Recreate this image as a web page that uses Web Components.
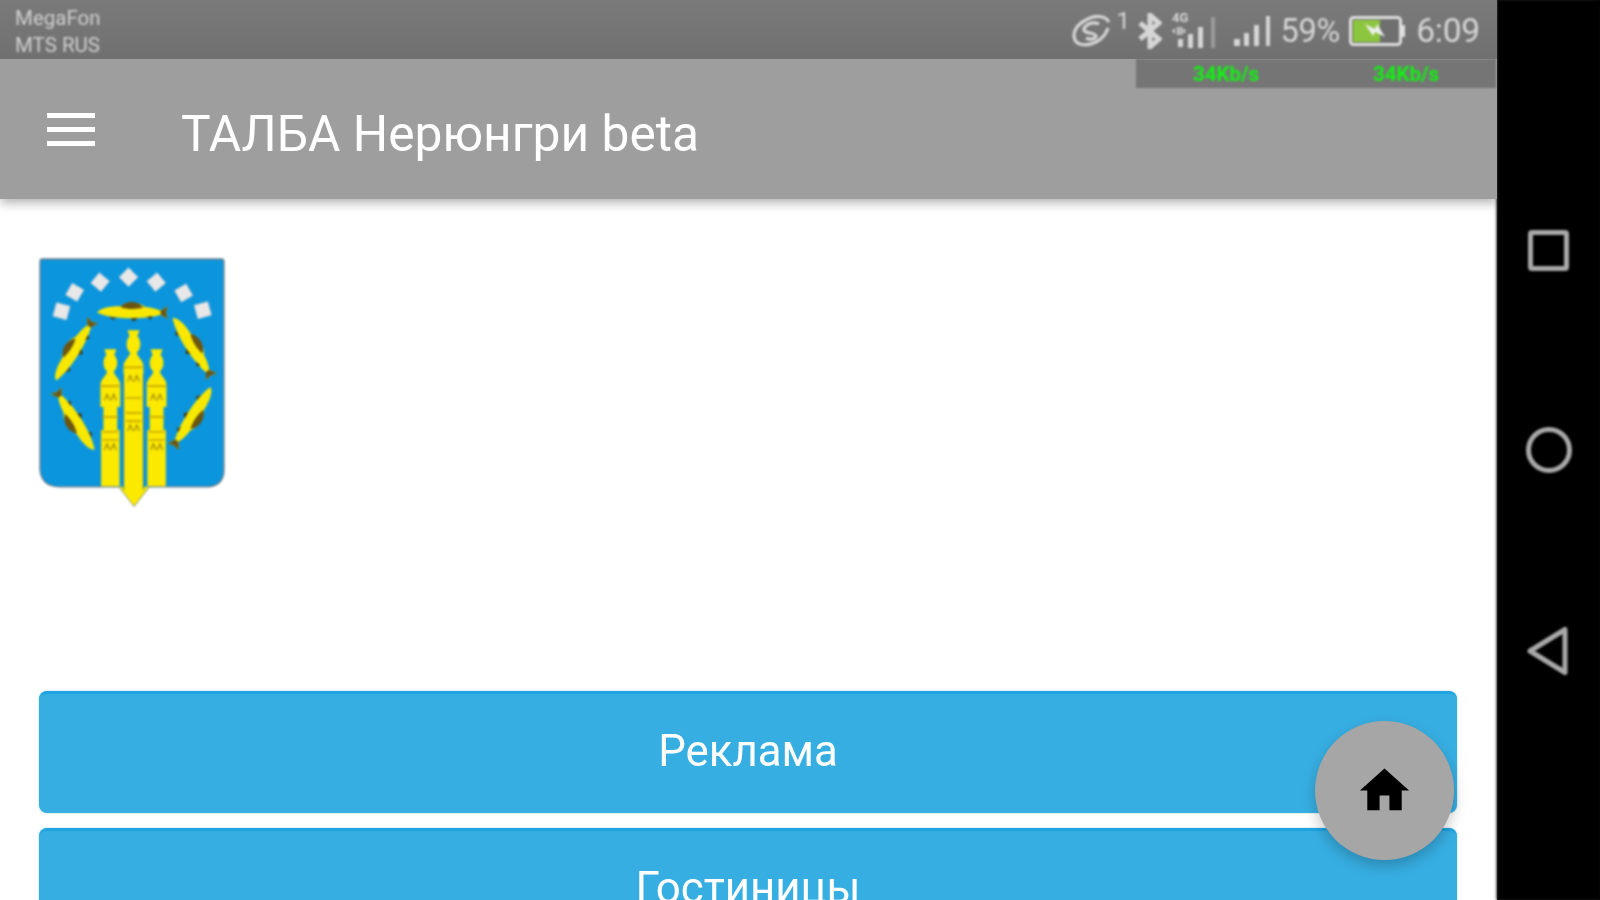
<!DOCTYPE html>
<html><head><meta charset="utf-8"><title>ТАЛБА Нерюнгри</title>
<style>html,body{margin:0;height:100%;overflow:hidden;background:#000;font-family:Roboto,"Liberation Sans",sans-serif}</style>
</head><body>
<phone-shell>
  <status-bar></status-bar>
  <app-toolbar title-text="ТАЛБА Нерюнгри beta"></app-toolbar>
  <home-content>
    <city-crest></city-crest>
    <big-button>Реклама</big-button>
    <big-button>Гостиницы</big-button>
  </home-content>
  <fab-home></fab-home>
</phone-shell>
<script>
function def(name, html, init){
  customElements.define(name, class extends HTMLElement{
    constructor(){super();this.attachShadow({mode:'open'}).innerHTML=html;}
    connectedCallback(){ if(init) init(this); }
  });
}
def('phone-shell',`<style>
:host{display:grid;grid-template-columns:1497px 103px;width:1600px;height:900px;overflow:hidden}
.main{position:relative;background:#fff;display:flex;flex-direction:column;height:900px;overflow:hidden}
.nav{background:#000;display:flex;flex-direction:column;align-items:center;filter:blur(.8px);box-shadow:-1px 0 2px #888}
.nav svg{display:block;fill:none;stroke:#a8a8a8;stroke-width:5;stroke-linejoin:round}
.nav svg:nth-child(1){margin-top:229px}
.nav svg:nth-child(2){margin-top:152px}
.nav svg:nth-child(3){margin-top:151px}
</style><div class="main"><slot></slot></div>
<div class="nav">
<svg width="44" height="44" viewBox="0 0 44 44"><rect x="3.5" y="3.5" width="36" height="36" rx="1.5"/></svg>
<svg width="50" height="50" viewBox="0 0 50 50"><circle cx="25" cy="25" r="20.5"/></svg>
<svg width="50" height="50" viewBox="0 0 50 50"><path d="M6 25 L41 3.500 V46.500 Z"/></svg>
</div>`);

def('status-bar',`<style>
:host{display:flex;flex:none;height:59px;background:linear-gradient(#7a7a7a,#707070);align-items:center;color:#d9d9d9;box-sizing:border-box;padding:0 17px 0 15px;position:relative;z-index:2}
.car{font-size:20.500px;line-height:27px;color:#cfcfcf;margin-top:4px;filter:blur(.8px)}
.sp{flex:1}
.icons{display:flex;align-items:center;filter:blur(.9px);color:#d6d6d6;margin-top:2px}
svg{display:block;flex:none}
.one{font-size:24px;align-self:flex-start;margin:-5px 0 0 4px;width:14px;line-height:30px}
.txt{font-size:32.500px;letter-spacing:-.2px;color:#d6d6d6}
</style>
<div class="car">MegaFon<br>MTS RUS</div><div class="sp"></div>
<div class="icons">
<svg width="40" height="36" viewBox="0 0 40 36" fill="none" stroke="currentColor" stroke-width="3.200"><path d="M37 9 C33 2 22 2 14 7 C4 12 0 20 3 27 C6 33 16 33 24 29 C30 26 34 21 36 15"/><path d="M27 11 C20 8 12 12 12 17 C13 21 23 19 24 23 C24 26 18 27 14 25"/></svg>
<span class="one">1</span>
<svg style="margin-left:8px" width="24" height="36" viewBox="0 0 24 36" fill="none" stroke="currentColor" stroke-width="5"><path d="M2 10 L21 26 L12 34 V2 L21 10 L2 26"/></svg>
<svg style="margin-left:10px;margin-top:-2px" width="50" height="40" viewBox="0 0 50 40"><text x="0" y="12" font-family="Roboto,sans-serif" font-size="13" font-weight="700" fill="currentColor">4G</text><path d="M3 18 l-3 3 3 3zM11 18 l3 3 -3 3zM5 17h2v8H5zM8 17h2v8H8z" fill="currentColor"/><g fill="currentColor"><rect x="6" y="29" width="5" height="8"/><rect x="16" y="24" width="5" height="14"/><rect x="26" y="17" width="5" height="21"/></g><rect x="39" y="7" width="4" height="31" fill="#9b9b9b"/></svg>
<svg style="margin-left:11px" width="40" height="32" viewBox="0 0 40 32" fill="currentColor"><rect x="1" y="24" width="6" height="7"/><rect x="11" y="18" width="5" height="13"/><rect x="21" y="10" width="5" height="21"/><rect x="33" y="1" width="4" height="30"/></svg>
<span class="txt" style="margin-left:7px">59%</span>
<svg style="margin-left:9px" width="57" height="30" viewBox="0 0 57 30"><rect x="1.500" y="1.500" width="50" height="27" rx="3" fill="#6f6f6f" stroke="#dedede" stroke-width="3"/><rect x="4" y="4" width="27" height="22" fill="#8cc63f"/><path d="M54 9 v12" stroke="#dedede" stroke-width="4"/><path d="M16 8 l10 5 2-5 8 13 -10-5 -2 4z" fill="#eee"/></svg>
<span class="txt" style="margin-left:10px;font-size:33.500px">6:09</span>
</div>`);

def('app-toolbar',`<style>
:host{display:flex;flex:none;height:140px;background:#9e9e9e;align-items:center;position:relative;z-index:1;box-shadow:0 4px 10px rgba(0,0,0,.3)}
.burger{margin-left:47px;width:48px;display:flex;flex-direction:column;gap:9px;margin-top:1px;filter:blur(.7px)}
.burger i{display:block;height:5px;background:#fff}
h1{margin:9px 0 0 86px;font:400 49.700px Roboto,sans-serif;color:#fff;filter:blur(.7px);white-space:nowrap}
.speed{position:absolute;top:0;right:1px;width:360px;height:29px;background:#757575;display:grid;grid-template-columns:1fr 1fr;text-align:center;font:700 20.500px/31px Roboto,sans-serif;color:#14f014;filter:blur(.8px)}
</style>
<div class="burger"><i></i><i></i><i></i></div>
<h1></h1>
<div class="speed"><span>34Kb/s</span><span>34Kb/s</span></div>`,
el=>{el.shadowRoot.querySelector('h1').textContent=el.getAttribute('title-text');});

def('home-content',`<style>
:host{display:flex;flex-direction:column;gap:15px;padding:60px 40px 0 39px;flex:none}
</style><slot></slot>`);

const fish=`<g id="f"><path d="M0 10 C10 -6 40 -10 70 -10 C90 -24 125 -24 145 -8 C165 -6 182 -2 192 4 L214 -10 L208 10 L214 28 L192 16 C150 30 50 32 0 10Z" fill="#f8e800"/><path d="M70 -8 C88 -28 122 -28 140 -6 C118 0 92 0 70 -8Z M192 4 L214 -10 L208 10 L214 28 L192 16Z" fill="#6b5510"/><path d="M36 22 l12 10 8-8zM100 27 l12 10 10-12zM150 22 l12 8 6-10z" fill="#3f3a1a"/></g>`;
const towers=(x,t,side)=>{
  const shaft=side?`V${t+175} H21 V${t+245} H28 V740 H-28 V${t+245} H-21 V${t+175} H-30`:`V740 H-30`;
  return `<g transform="translate(${x} 0)"><path d="M-18 ${t} H18 L12 ${t+18} C24 ${t+30} 24 ${t+55} 10 ${t+68} C14 ${t+85} 30 ${t+90} 30 ${t+110} ${shaft} V${t+110} C-30 ${t+90} -14 ${t+85} -10 ${t+68} C-24 ${t+55} -24 ${t+30} -12 ${t+18}Z" fill="#fbe900"/><path d="M-28 ${t+112} H28 M-24 ${t+205} H24 M-24 ${t+250} H24 M-24 ${t+275} H24" stroke="#c9a800" stroke-width="5"/><path d="M-18 ${t+155} l8 -18 8 18 M2 ${t+155} l8 -18 8 18 M-18 ${t+305} l8 -18 8 18 M2 ${t+305} l8 -18 8 18" fill="none" stroke="#a88f10" stroke-width="4"/></g>`;
};
def('city-crest',`<style>
:host{display:block;width:186px;height:247px;margin-bottom:170px;filter:blur(1px)}
svg{display:block;overflow:visible}
</style>
<svg width="186" height="247" viewBox="55 52 557 748">
<path d="M55 60 Q55 52 63 52 H604 Q612 52 612 60 V690 Q612 740 560 742 H385 L340 800 L295 742 H115 Q58 740 55 690Z" fill="#0b95dd" stroke="#6d7f8a" stroke-width="4"/>
<g fill="#e8e8e8" stroke="#cfcfcf" stroke-width="2">
<rect x="-21" y="-21" width="42" height="42" transform="translate(120 210) rotate(15)"/>
<rect x="-20" y="-20" width="40" height="40" transform="translate(160 153) rotate(30)"/>
<rect x="-20" y="-20" width="40" height="40" transform="translate(237 122) rotate(40)"/>
<rect x="-20" y="-20" width="40" height="40" transform="translate(323 107) rotate(45)"/>
<rect x="-20" y="-20" width="40" height="40" transform="translate(407 122) rotate(50)"/>
<rect x="-20" y="-20" width="40" height="40" transform="translate(490 155) rotate(60)"/>
<rect x="-21" y="-21" width="42" height="42" transform="translate(548 207) rotate(75)"/>
</g>
<defs>${fish}</defs>
<use href="#f" transform="translate(228 205)"/>
<use href="#f" transform="translate(95 415) rotate(-58.600)"/>
<use href="#f" transform="translate(465 225) rotate(56.700)"/>
<use href="#f" transform="translate(212 635) rotate(-123)"/>
<use href="#f" transform="translate(580 445) rotate(122.200)"/>
${towers(268,325,true)}${towers(408,325,true)}
<path d="M295 742 H385 L340 800Z" fill="#fbe900"/>
${towers(338,268,false)}
<path d="M308 735 H368 V755 L338 796 L308 755Z" fill="#fbe900"/>
<path d="M308 400 V750 M368 400 V750" stroke="#2a7fa8" stroke-width="3"/>
</svg>`);

def('big-button',`<style>
:host{display:flex;align-items:center;justify-content:center;flex:none;height:122px;background:#37aee2;border-radius:8px;border-top:3px solid #1fa4e0;box-sizing:border-box;color:#fff;font:400 43.800px Roboto,sans-serif;box-shadow:0 0 2px rgba(55,174,226,.5)}
span{filter:blur(.7px);margin-top:-6px}
</style><span><slot></slot></span>`);

def('fab-home',`<style>
:host{position:absolute;right:43px;bottom:40px;width:139px;height:139px;border-radius:50%;background:#a6a6a6;display:flex;align-items:center;justify-content:center;box-shadow:0 6px 14px rgba(0,0,0,.22);z-index:3}
svg{display:block;filter:blur(.5px)}
</style><svg width="59" height="59" viewBox="0 0 24 24"><path d="M10 20v-6h4v6h5v-8h3L12 3 2 12h3v8z" fill="#000"/></svg>`);
</script>
</body></html>
